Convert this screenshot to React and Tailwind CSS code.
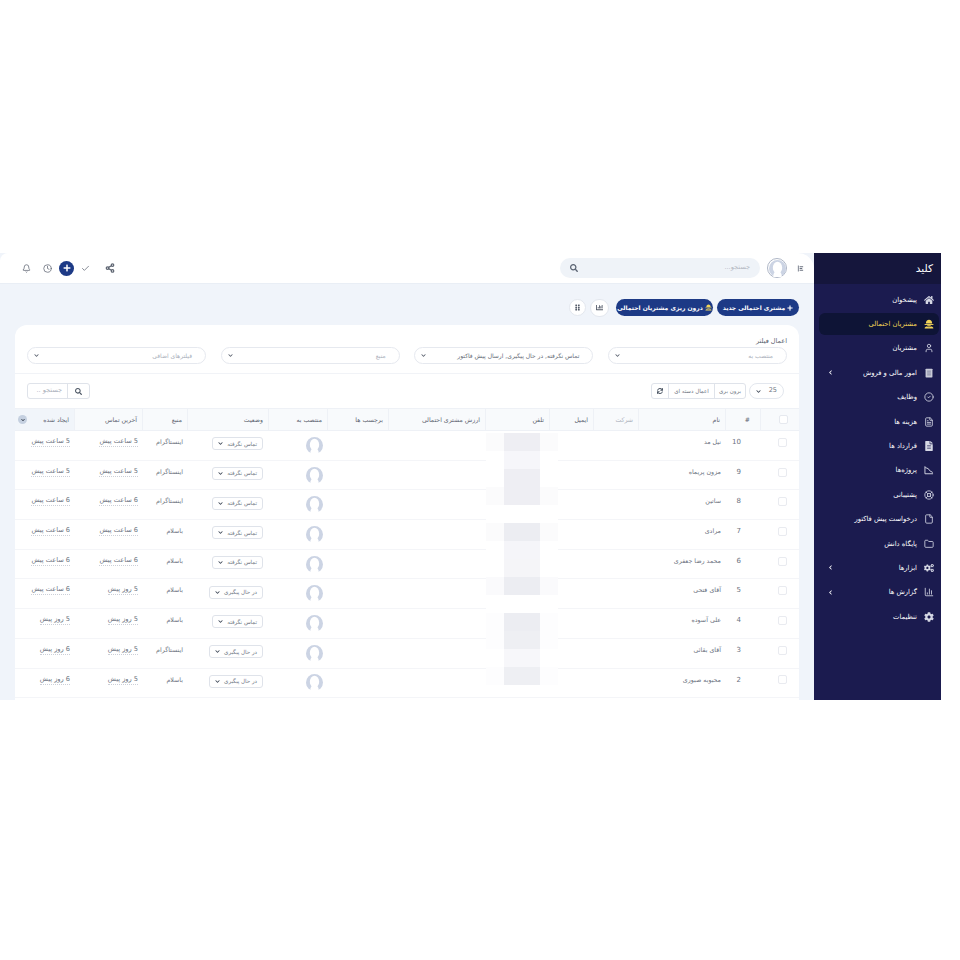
import React from "react";
import { FaHome, FaFileAlt, FaCogs, FaCog, FaSearch, FaPlus, FaChevronLeft, FaChevronDown, FaSync, FaGripVertical, FaChartBar } from "react-icons/fa";
import { User, CircleCheck, FileText, LifeBuoy, File, Folder, ChartColumn, Clock, Bell, Share2, Check } from "lucide-react";

const LeadIcon = ({ className }) => (
  <svg className={className} viewBox="0 0 16 16" fill="currentColor">
    <path d="M3 7C3 3 5 1 8 1s5 2 5 6z" />
    <path d="M1 8h14v1.5H1z" />
    <path d="M5 10h6c0 1-1 2-3 2s-3-1-3-2z" />
    <path d="M1 15c0-2 2-3 4-3l3 1 3-1c2 0 4 1 4 3z" />
  </svg>
);

const LedgerIcon = ({ className }) => (
  <svg className={className} viewBox="0 0 16 16">
    <rect x="2.5" y="1" width="11" height="14" rx="1" fill="#c9cbd8" />
    <path d="M5 5h6M5 8h6M5 11h6" stroke="#5c5e80" strokeWidth="1" />
  </svg>
);

const ProjectIcon = ({ className }) => (
  <svg className={className} viewBox="0 0 16 16" fill="none" stroke="currentColor" strokeWidth="1.5">
    <path d="M1.5 2v12h13" />
    <path d="M2 4l5 2 2 3 5 3" />
  </svg>
);

const menu = [
  { label: "پیشخوان", icon: FaHome },
  { label: "مشتریان احتمالی", icon: LeadIcon, active: true },
  { label: "مشتریان", icon: User },
  { label: "امور مالی و فروش", icon: LedgerIcon, arrow: true },
  { label: "وظایف", icon: CircleCheck },
  { label: "هزینه ها", icon: FileText },
  { label: "قرارداد ها", icon: FaFileAlt },
  { label: "پروژه‌ها", icon: ProjectIcon },
  { label: "پشتیبانی", icon: LifeBuoy },
  { label: "درخواست پیش فاکتور", icon: File },
  { label: "پایگاه دانش", icon: Folder },
  { label: "ابزارها", icon: FaCogs, arrow: true },
  { label: "گزارش ها", icon: ChartColumn, arrow: true },
  { label: "تنظیمات", icon: FaCog },
];

const cols = ["#", "نام", "شرکت", "ایمیل", "تلفن", "ارزش مشتری احتمالی", "برچسب ها", "منتصب به", "وضعیت", "منبع", "آخرین تماس", "ایجاد شده"];

const NOT = "تماس نگرفته";
const FOL = "در حال پیگیری";
const INS = "اینستاگرام";
const BAS = "باسلام";

const rows = [
  [10, "نیل مد", NOT, INS, "5 ساعت پیش", "5 ساعت پیش"],
  [9, "مزون پریماه", NOT, INS, "5 ساعت پیش", "5 ساعت پیش"],
  [8, "ساتین", NOT, INS, "6 ساعت پیش", "6 ساعت پیش"],
  [7, "مرادی", NOT, BAS, "6 ساعت پیش", "6 ساعت پیش"],
  [6, "محمد رضا جعفری", NOT, BAS, "6 ساعت پیش", "6 ساعت پیش"],
  [5, "آقای فتحی", FOL, BAS, "5 روز پیش", "6 ساعت پیش"],
  [4, "علی آسوده", NOT, BAS, "5 روز پیش", "5 روز پیش"],
  [3, "آقای بقائی", FOL, INS, "5 روز پیش", "6 روز پیش"],
  [2, "محبوبه صبوری", FOL, BAS, "5 روز پیش", "6 روز پیش"],
];

// pixelated phone numbers, one strip per 18px: [middle colour, side colour]
const tiles = [
  ["#eeeef3", "#fbfbfc"], ["#f6f6fa", "#ffffff"], ["#eeeef3", "#ffffff"], ["#eeeef3", "#fbfbfc"], ["#ffffff", "#ffffff"],
  ["#ecedf2", "#fbfbfc"], ["#f5f5f9", "#ffffff"], ["#f5f5f8", "#ffffff"], ["#ecedf2", "#fafafc"], ["#ffffff", "#ffffff"],
  ["#ecedf2", "#fdfdfe"], ["#eeeff3", "#fdfdfe"], ["#f7f7fa", "#ffffff"], ["#eeeff3", "#fdfdfe"],
];

const grid = "grid grid-cols-[39px_35px_87px_45px_44px_64px_97px_61px_59px_81px_45px_68px_59px]";

const Avatar = ({ size }) => (
  <svg width={size} height={size} viewBox="0 0 20 20">
    <circle cx="10" cy="10" r="10" fill="#ccd4e4" />
    <ellipse cx="10" cy="9" rx="5.5" ry="7" fill="#ffffff" />
    <path d="M5 20 Q5 13 10 13 Q15 13 15 20 Z" fill="#ffffff" />
  </svg>
);

const Filter = ({ text, dark }) => (
  <div className="flex h-[17px] w-[179px] items-center justify-between rounded-full border border-[#e6e9ef] bg-white pr-[13px] pl-[6px]">
    <span className={"whitespace-nowrap text-[6px] " + (dark ? "text-[#666c78]" : "text-[#aab0bb]")}>{text}</span>
    <FaChevronDown className="text-[5px] text-[#555c6a]" />
  </div>
);

const Sidebar = () => (
  <aside className="flex w-[127px] shrink-0 flex-col bg-[#1b1b4f]">
    <div className="flex h-[31px] shrink-0 items-center bg-[#15163c] px-2 text-[10.5px] text-white">کلید</div>
    <nav className="flex flex-col pt-[3.5px]">
      {menu.map((m) => (
        <div key={m.label} className="flex h-[24.4px] items-center pr-[2px] pl-[5px]">
          <div
            className={
              "flex h-[22px] w-full items-center gap-[7px] rounded-md pr-[5px] pl-[9px] text-[6.8px] " +
              (m.active ? "bg-[#0e1436] text-[#f2d558]" : "text-white")
            }
          >
            <m.icon className={"h-[10px] w-[10px] shrink-0 " + (m.active ? "text-[#f2d558]" : "text-[#d5d7e4]")} />
            <span className="whitespace-nowrap">{m.label}</span>
            {m.arrow && <FaChevronLeft className="mr-auto text-[5px] text-white" />}
          </div>
        </div>
      ))}
    </nav>
  </aside>
);

const TopBar = () => (
  <header className="flex h-[31px] shrink-0 items-center justify-between rounded-tl-lg rounded-tr-2xl border-b border-[#e9eef5] bg-white pr-[10px] pl-[22px]">
    <div className="flex items-center">
      <svg className="ml-[10px]" width="7" height="7" viewBox="0 0 16 16" fill="#6b7280">
        <path d="M2 1h2v14H2zM6 3h8v2H6zM6 7h6v2H6zM6 11h8v2H6z" />
      </svg>
      <div className="ml-[7px] flex h-[20px] w-[20px] items-center justify-center rounded-full border border-[#aeb6c6]">
        <Avatar size={17} />
      </div>
      <div className="flex h-[20px] w-[200px] items-center justify-between rounded-full bg-[#eff3f8] px-[10px]">
        <span className="text-[6.5px] text-[#b3b8c2]">جستجو...</span>
        <FaSearch className="text-[8px] text-[#5a6372]" />
      </div>
    </div>
    <div className="flex items-center text-[#5f6673]">
      <Share2 className="ml-[15px] h-[10px] w-[10px]" strokeWidth={3} />
      <Check className="ml-[7px] h-[9px] w-[9px]" />
      <div className="ml-[7px] flex h-[15px] w-[15px] items-center justify-center rounded-full bg-[#1d3a86]">
        <FaPlus className="text-[8px] text-white" />
      </div>
      <Clock className="ml-[12px] h-[9px] w-[9px]" />
      <Bell className="h-[9px] w-[9px]" />
    </div>
  </header>
);

const Actions = () => (
  <div className="flex h-[41px] shrink-0 items-center gap-[4px] pt-[6px] pr-[15px]">
    <button className="flex h-[17px] w-[82px] items-center justify-center gap-[2px] whitespace-nowrap rounded-full bg-[#1d3a86] text-[6px] font-bold text-white">
      <FaPlus className="text-[6px]" />
      مشتری احتمالی جدید
    </button>
    <button className="flex h-[17px] w-[97px] items-center justify-center gap-[2px] whitespace-nowrap rounded-full bg-[#1d3a86] text-[6px] font-bold text-white">
      <LeadIcon className="h-[7px] w-[7px] text-[#f2d558]" />
      درون ریزی مشتریان احتمالی
    </button>
    <button className="mr-[3px] flex h-[18px] w-[19px] items-center justify-center rounded-full border border-[#e3e7ee] bg-white">
      <FaChartBar className="text-[7px] text-[#555c6a]" />
    </button>
    <button className="flex h-[17px] w-[17px] items-center justify-center rounded-full border border-[#e3e7ee] bg-white">
      <FaGripVertical className="text-[7px] text-[#555c6a]" />
    </button>
  </div>
);

const FilterBar = () => (
  <div className="h-[49px] border-b border-[#f1f3f7] px-[12px] pt-[11px]">
    <div className="mb-[1px] h-[10px] text-[6.5px] leading-[10px] text-[#5c6370]">اعمال فیلتر</div>
    <div className="flex justify-between">
      <Filter text="منتصب به" />
      <Filter text="تماس نگرفته, در حال پیگیری, ارسال پیش فاکتور" dark />
      <Filter text="منبع" />
      <Filter text="فیلترهای اضافی" />
    </div>
  </div>
);

const Toolbar = () => (
  <div className="flex h-[34px] items-center justify-between pr-[15px] pl-[12px]">
    <div className="flex items-center gap-[3px]">
      <div className="flex h-[16px] w-[35px] items-center justify-between rounded-full border border-[#e3e7ee] px-[6px] text-[6.5px] text-[#6b7280]">
        <span>25</span>
        <FaChevronDown className="text-[5px] text-[#374151]" />
      </div>
      <div className="flex h-[16px] items-center rounded-[3px] border border-[#dfe3ea] text-[5.5px] text-[#6b7280]">
        <span className="flex h-full w-[31px] items-center justify-center border-l border-[#dfe3ea]">برون بری</span>
        <span className="flex h-full w-[46px] items-center justify-center border-l border-[#dfe3ea]">اعمال دسته ای</span>
        <span className="flex h-full w-[16px] items-center justify-center">
          <FaSync className="text-[6px] text-[#4b5563]" />
        </span>
      </div>
    </div>
    <div className="flex h-[16px] items-center rounded-[3px] border border-[#dfe3ea] text-[6.5px] text-[#aab0bb]">
      <span className="flex h-full w-[22px] items-center justify-center border-l border-[#dfe3ea]">
        <FaSearch className="text-[7px] text-[#4b5563]" />
      </span>
      <span className="flex h-full w-[39px] items-center pr-[5px]">جستجو ..</span>
    </div>
  </div>
);

const Table = () => (
  <div className="relative">
    <div className={grid + " h-[23px] border-y border-[#eef1f6] bg-[#f8fafc] text-[6.2px] text-[#5c6370]"}>
      <div className="flex items-center justify-center border-l border-[#eef1f6] pl-[6px]">
        <span className="h-[9px] w-[9px] rounded-[2px] border border-[#e6e9ef] bg-white" />
      </div>
      {cols.map((c, i) => (
        <div
          key={c}
          className={
            "relative flex items-center whitespace-nowrap " +
            (c === "#" ? "pr-[10px] " : "pr-[5px] ") +
            (i < cols.length - 1 ? "border-l border-[#eef1f6] " : "") +
            (c === "شرکت" ? "text-[#aab0bb] " : "") +
            (c === "ایجاد شده" ? "bg-[#f1f5fa] " : "")
          }
        >
          {c}
          {c === "ایجاد شده" && (
            <span className="absolute left-[3px] flex h-[9px] w-[9px] items-center justify-center rounded-full bg-[#c5d0e0]">
              <FaChevronDown className="text-[4px] text-[#1f2937]" />
            </span>
          )}
        </div>
      ))}
    </div>
    {rows.map((r) => (
      <div key={r[0]} className={grid + " h-[29.7px] border-b border-[#f4f5f8] text-[6.3px] text-[#6b7280]"}>
        <div className="flex items-center justify-center pl-[6px]">
          <span className="mt-[-6px] h-[9px] w-[9px] rounded-[2px] border border-[#e9ebf0]" />
        </div>
        <div className="pt-[6px] pr-[19px] text-[7px]">{r[0]}</div>
        <div className="col-span-6 pt-[6px] pr-[4px] whitespace-nowrap">{r[1]}</div>
        <div className="flex items-center pr-[4px]">
          <Avatar size={17} />
        </div>
        <div className="flex items-center pr-[5px] pb-[3px]">
          <span className="flex h-[13px] items-center gap-[4px] whitespace-nowrap rounded-[3px] border border-[#dfe3ea] px-[5px] text-[5.5px]">
            {r[2]}
            <FaChevronDown className="text-[5px] text-[#374151]" />
          </span>
        </div>
        <div className="pt-[6px] pr-[4px] whitespace-nowrap">{r[3]}</div>
        <div className="pt-[6px] pr-[4px] text-[6.6px] whitespace-nowrap"><span className="border-b border-dotted border-[#ccd0d8] pb-[1px]">{r[4]}</span></div>
        <div className="pt-[6px] pr-[4px] text-[6.6px] whitespace-nowrap"><span className="border-b border-dotted border-[#ccd0d8] pb-[1px]">{r[5]}</span></div>
      </div>
    ))}
    <div className="absolute top-[25px] left-[471px] w-[72px]">
      {tiles.map(([mid, side], i) => (
        <div key={i} className="flex h-[18px]">
          <div className="w-[18px]" style={{ backgroundColor: side }} />
          <div className="w-[36px]" style={{ backgroundColor: mid }} />
          <div className="w-[18px]" style={{ backgroundColor: side }} />
        </div>
      ))}
    </div>
  </div>
);

export default function App() {
  return (
    <div dir="rtl" className="min-h-[960px] bg-white font-['DejaVu_Sans','Noto_Sans',sans-serif]">
      <div className="h-[253px]" />
      <div className="mr-auto flex h-[447px] w-[941px] overflow-hidden bg-[#1b1b4f]">
        <Sidebar />
        <main className="flex w-[814px] flex-col overflow-hidden bg-[#f0f4fa]">
          <TopBar />
          <Actions />
          <div className="mr-[15px] h-[400px] w-[784px] rounded-t-xl bg-white">
            <FilterBar />
            <Toolbar />
            <Table />
          </div>
        </main>
      </div>
    </div>
  );
}
